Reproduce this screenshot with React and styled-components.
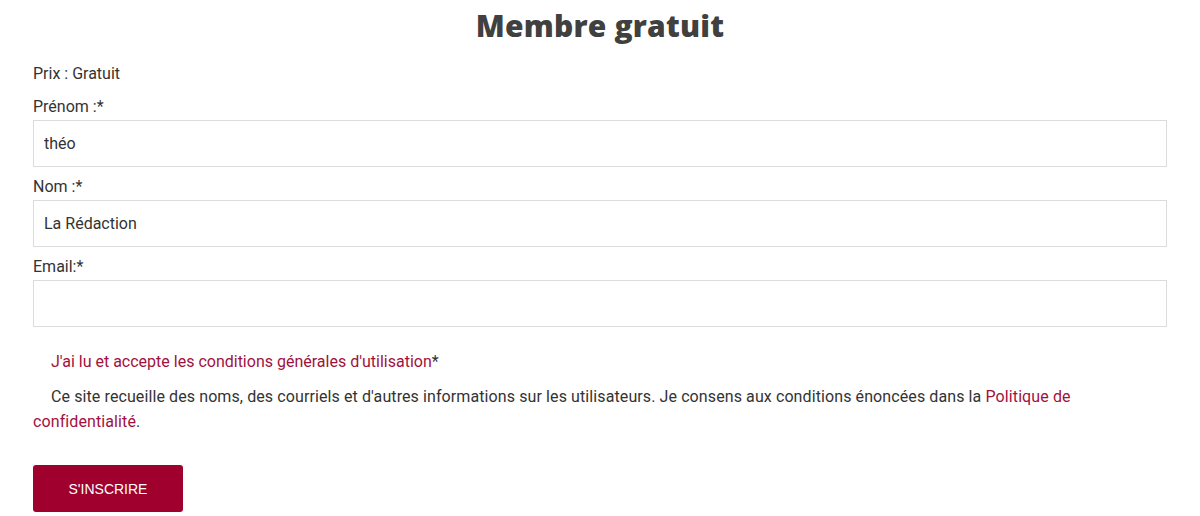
import styled, { createGlobalStyle } from "styled-components";

const GlobalStyle = createGlobalStyle`
  body {
    margin: 0;
    background: #ffffff;
    font-family: Roboto, "Liberation Sans", Arial, sans-serif;
  }
`;

const Page = styled.div`
  padding: 4px 33px 0;
  color: #333333;
`;

const Title = styled.h1`
  margin: 0;
  text-align: center;
  font-family: "Open Sans", "Liberation Sans", sans-serif;
  font-weight: 800;
  font-size: 30px;
  line-height: 44px;
  color: #404040;
  letter-spacing: 0.2px;
`;

const Price = styled.p`
  margin: 16px 0 0;
  font-size: 16px;
  line-height: 20px;
`;

const Form = styled.form`
  display: flex;
  flex-direction: column;
  margin-top: 13px;
`;

const Field = styled.div`
  display: flex;
  flex-direction: column;
  gap: 3px;
  margin-bottom: 10px;
`;

const Label = styled.label`
  font-size: 16px;
  line-height: 20px;
`;

const Input = styled.input`
  box-sizing: border-box;
  height: 47px;
  padding: 0 10px;
  border: 1px solid #dcdcdc;
  border-radius: 0;
  font-family: Roboto, "Liberation Sans", Arial, sans-serif;
  font-size: 16px;
  color: #333333;
  background: #ffffff;
  outline: none;
`;

const Consent = styled.p`
  margin: 15px 0 0;
  padding-left: 18px;
  font-size: 16px;
  line-height: 20px;
  color: #a1113e;

  span {
    color: #333333;
  }
`;

const Notice = styled.p`
  margin: 12px 0 0;
  text-indent: 18px;
  font-size: 16px;
  line-height: 25px;
  letter-spacing: 0.1px;

  a {
    color: #a1113e;
    text-decoration: none;
  }
`;

const Button = styled.button`
  align-self: flex-start;
  margin-top: 31px;
  width: 150px;
  height: 47px;
  border: none;
  border-radius: 3px;
  background: #a0002e;
  color: #ffffff;
  font-family: "Liberation Sans", Arial, sans-serif;
  font-size: 14px;
  text-transform: uppercase;
  cursor: pointer;
`;

export default function App() {
  return (
    <Page>
      <GlobalStyle />
      <Title>Membre gratuit</Title>
      <Price>Prix : Gratuit</Price>
      <Form onSubmit={(e) => e.preventDefault()}>
        <Field>
          <Label htmlFor="prenom">Prénom :*</Label>
          <Input id="prenom" defaultValue="théo" />
        </Field>
        <Field>
          <Label htmlFor="nom">Nom :*</Label>
          <Input id="nom" defaultValue="La Rédaction" />
        </Field>
        <Field>
          <Label htmlFor="email">Email:*</Label>
          <Input id="email" type="email" />
        </Field>
        <Consent>
          J'ai lu et accepte les conditions générales d'utilisation<span>*</span>
        </Consent>
        <Notice>
          Ce site recueille des noms, des courriels et d'autres informations sur les utilisateurs. Je consens aux conditions énoncées dans la{" "}
          <a href="#">Politique de confidentialité</a>.
        </Notice>
        <Button type="submit">S'inscrire</Button>
      </Form>
    </Page>
  );
}
